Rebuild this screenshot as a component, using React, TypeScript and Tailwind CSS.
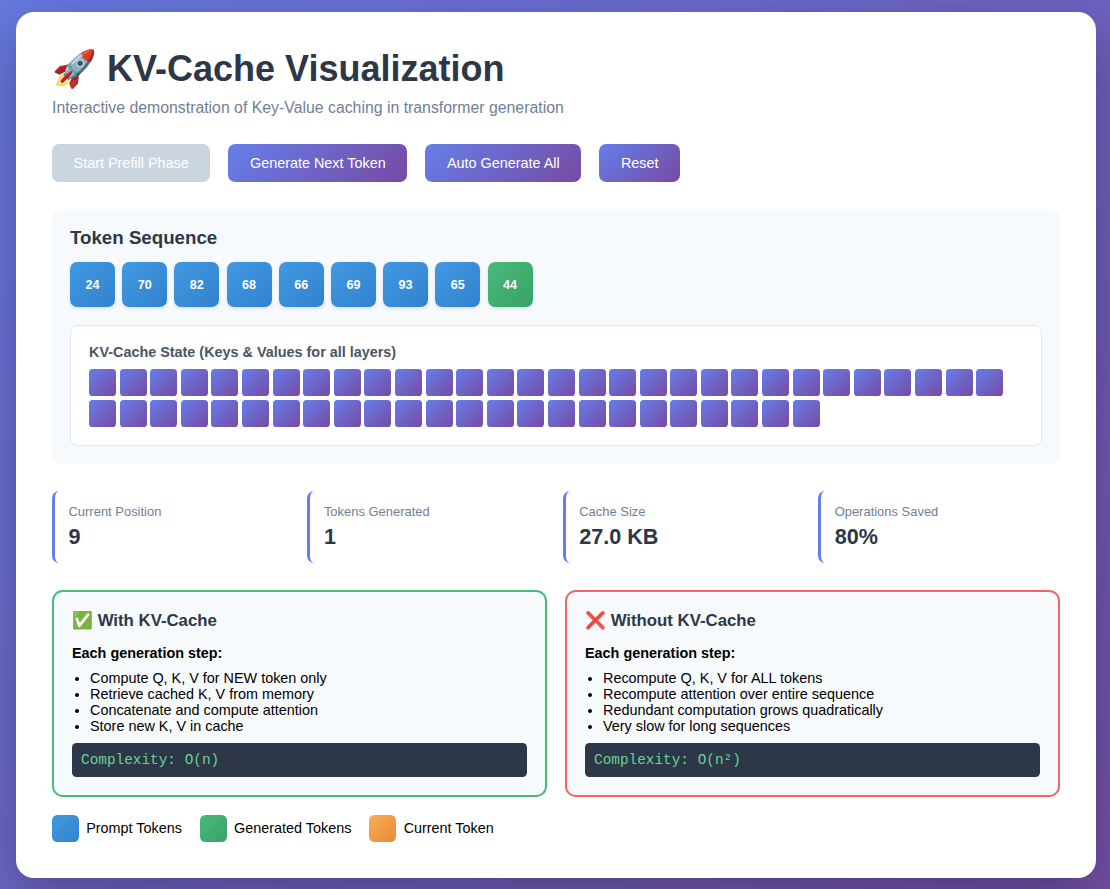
const PROMPT_TOKENS = [24, 70, 82, 68, 66, 69, 93, 65];
const GENERATED_TOKENS = [44];
const CACHE_CELLS = 54;

const STATS = [
  { label: 'Current Position', value: '9' },
  { label: 'Tokens Generated', value: '1' },
  { label: 'Cache Size', value: '27.0 KB' },
  { label: 'Operations Saved', value: '80%' },
];

const LEGEND = [
  { label: 'Prompt Tokens', color: 'from-[#4299e1] to-[#3182ce]' },
  { label: 'Generated Tokens', color: 'from-[#48bb78] to-[#38a169]' },
  { label: 'Current Token', color: 'from-[#f6ad55] to-[#ed8936]' },
];

function ActionButton({ label, disabled = false }: { label: string; disabled?: boolean }) {
  return (
    <button
      disabled={disabled}
      className={`h-[38px] rounded-[7.2px] px-[21.6px] text-[14.4px] leading-4 text-white ${
        disabled ? 'bg-[#cbd5e0]' : 'bg-linear-[135deg,#667eea,#764ba2]'
      }`}
    >
      {label}
    </button>
  );
}

function Token({ value, generated = false }: { value: number; generated?: boolean }) {
  return (
    <div
      className={`flex size-[45px] items-center justify-center rounded-[7.2px] bg-linear-[135deg] pt-px text-[12.6px] leading-[14px] font-bold text-white shadow-[0_1.8px_3.6px_rgba(0,0,0,0.1)] ${
        generated ? 'from-[#48bb78] to-[#38a169]' : 'from-[#4299e1] to-[#3182ce]'
      }`}
    >
      {value}
    </div>
  );
}

function Comparison({
  title,
  border,
  steps,
  complexity,
}: {
  title: string;
  border: string;
  steps: string[];
  complexity: string;
}) {
  return (
    <section className={`h-[207px] flex-1 rounded-[10.8px] border-2 bg-[#f7fafc] p-[18px] ${border}`}>
      <h3 className="mb-[13px] text-[16.8px] leading-[22px] font-bold text-[#2d3748]">{title}</h3>
      <p className="mb-[9px] text-[14.4px] leading-4 font-bold">Each generation step:</p>
      <ul className="list-disc pl-[18px] text-[14.4px] leading-4">
        {steps.map((step) => (
          <li key={step}>{step}</li>
        ))}
      </ul>
      <div className="mt-[9px] h-[34px] rounded-[4.5px] bg-[#2d3748] p-[9px] font-['Liberation_Mono',monospace] text-[14.4px] leading-4 text-[#68d391]">
        {complexity}
      </div>
    </section>
  );
}

export default function App() {
  return (
    <div className="h-[889px] overflow-hidden bg-linear-[135deg] from-[#6779e0] to-[#7450a8] pt-3 pl-4 font-['Liberation_Sans',sans-serif] text-black">
      <main className="h-[866px] w-[1080px] rounded-[18px] bg-white p-9 shadow-[0_18px_54px_rgba(0,0,0,0.3)]">
        <h1 className="mb-[10px] text-[36px] leading-[41px] font-bold text-[#2d3748]">🚀 KV-Cache Visualization</h1>
        <p className="mb-[27px] text-[15.84px] leading-[18px] text-[#718096]">
          Interactive demonstration of Key-Value caching in transformer generation
        </p>

        <div className="mb-[27px] flex gap-[18px]">
          <ActionButton label="Start Prefill Phase" disabled />
          <ActionButton label="Generate Next Token" />
          <ActionButton label="Auto Generate All" />
          <ActionButton label="Reset" />
        </div>

        <section className="mb-[27px] h-[255px] rounded-[10.8px] bg-[#f7fafc] p-[18px]">
          <h2 className="mb-[14px] text-[18.72px] leading-[21px] font-bold text-[#2d3748]">Token Sequence</h2>
          <div className="mb-[18px] flex gap-[7.2px]">
            {PROMPT_TOKENS.map((token) => (
              <Token key={token} value={token} />
            ))}
            {GENERATED_TOKENS.map((token) => (
              <Token key={token} value={token} generated />
            ))}
          </div>
          <div className="h-[121px] rounded-[7.2px] border border-[#e2e8f0] bg-white p-[18px]">
            <h4 className="mb-[9px] text-[14.4px] leading-4 font-bold text-[#4a5568]">
              KV-Cache State (Keys &amp; Values for all layers)
            </h4>
            <div className="flex flex-wrap gap-[3.6px]">
              {Array.from({ length: CACHE_CELLS }, (_, i) => (
                <div key={i} className="size-[27px] rounded-[3.6px] bg-linear-[135deg,#667eea,#764ba2]" />
              ))}
            </div>
          </div>
        </section>

        <div className="mb-[27px] grid grid-cols-4 gap-[13.5px]">
          {STATS.map(({ label, value }) => (
            <div key={label} className="h-[72px] rounded-[7.2px] border-l-[3px] border-[#667eea] bg-white px-[13.5px] pt-[13px]">
              <div className="mb-[5px] text-[12.96px] leading-[15px] text-[#718096]">{label}</div>
              <div className="text-[21.6px] leading-[25px] font-bold text-[#2d3748]">{value}</div>
            </div>
          ))}
        </div>

        <div className="mb-[18px] flex gap-[18px]">
          <Comparison
            title="✅ With KV-Cache"
            border="border-[#48bb78]"
            steps={[
              'Compute Q, K, V for NEW token only',
              'Retrieve cached K, V from memory',
              'Concatenate and compute attention',
              'Store new K, V in cache',
            ]}
            complexity="Complexity: O(n)"
          />
          <Comparison
            title="❌ Without KV-Cache"
            border="border-[#f56565]"
            steps={[
              'Recompute Q, K, V for ALL tokens',
              'Recompute attention over entire sequence',
              'Redundant computation grows quadratically',
              'Very slow for long sequences',
            ]}
            complexity="Complexity: O(n²)"
          />
        </div>

        <div className="flex gap-[18px]">
          {LEGEND.map(({ label, color }) => (
            <div key={label} className="flex items-center gap-[7.2px] text-[14.4px] leading-4">
              <div className={`size-[27px] rounded-[5.4px] bg-linear-[135deg] ${color}`} />
              <span className="pb-px">{label}</span>
            </div>
          ))}
        </div>
      </main>
    </div>
  );
}
